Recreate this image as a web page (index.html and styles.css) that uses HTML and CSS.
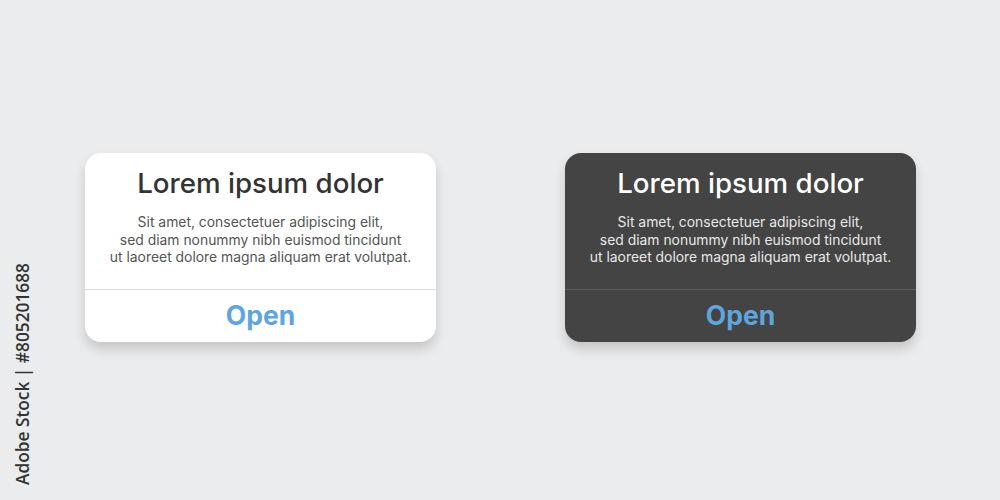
FILE: index.html
```html
<!DOCTYPE html>
<html lang="en">
<head>
  <meta charset="UTF-8" />
  <title>Alert dialogs</title>
  <link rel="stylesheet" href="styles.css">
</head>
<body>

  <div class="credit">Adobe Stock | #805201688</div>

  <div class="stage">
    <div class="dialog light">
      <div class="dialog-body">
        <h2>Lorem ipsum dolor</h2>
        <p>Sit amet, consectetuer adipiscing elit,<br>
          sed diam nonummy nibh euismod tincidunt<br>
          ut laoreet dolore magna aliquam erat volutpat.</p>
      </div>
      <button class="dialog-action">Open</button>
    </div>

    <div class="dialog dark">
      <div class="dialog-body">
        <h2>Lorem ipsum dolor</h2>
        <p>Sit amet, consectetuer adipiscing elit,<br>
          sed diam nonummy nibh euismod tincidunt<br>
          ut laoreet dolore magna aliquam erat volutpat.</p>
      </div>
      <button class="dialog-action">Open</button>
    </div>
  </div>

</body>
</html>
```

FILE: styles.css
```css
body {
  margin: 0;
  width: 1000px;
  height: 500px;
  background: #ebecee;
  font-family: 'Inter', 'Roboto', sans-serif;
  position: relative;
  overflow: hidden;
}
.stage {
  display: flex;
  gap: 129px;
  padding: 153px 0 0 85px;
}
.dialog {
  width: 351px;
  height: 189px;
  border-radius: 16px;
  display: flex;
  flex-direction: column;
  box-shadow: 0 7px 12px rgba(0, 0, 0, 0.16);
}
.dialog-body {
  height: 136px;
  text-align: center;
  box-sizing: border-box;
  padding-top: 13px;
}
.dialog h2 {
  margin: 0;
  font-size: 27.7px;
  font-weight: 500;
  line-height: 34px;
}
.dialog p {
  margin: 14px 0 0;
  font-size: 13.9px;
  line-height: 17.5px;
  font-weight: 400;
}
.dialog-action {
  flex: 1;
  background: none;
  border: none;
  border-top: 1.5px solid;
  font-family: 'Inter', 'Roboto', sans-serif;
  font-size: 26.5px;
  font-weight: 700;
  color: #5fa4dc;
  padding: 0 0 2px;
  cursor: pointer;
}
.light {
  background: #fff;
}
.light h2 { color: #333; }
.light p { color: #555; }
.light .dialog-action { border-top-color: #d9d9d9; }
.dark {
  background: #444444;
}
.dark h2 { color: #fff; }
.dark p { color: #e8e8e8; }
.dark .dialog-action { border-top-color: #5c5c5c; }

/* stock id printed up the left edge */
.credit {
  position: absolute;
  left: 22px;
  top: 374px;
  transform: translate(-50%, -50%) rotate(-90deg);
  white-space: nowrap;
  font-family: 'Open Sans', sans-serif;
  font-size: 17.3px;
  font-weight: 600;
  color: #333;
}
```
